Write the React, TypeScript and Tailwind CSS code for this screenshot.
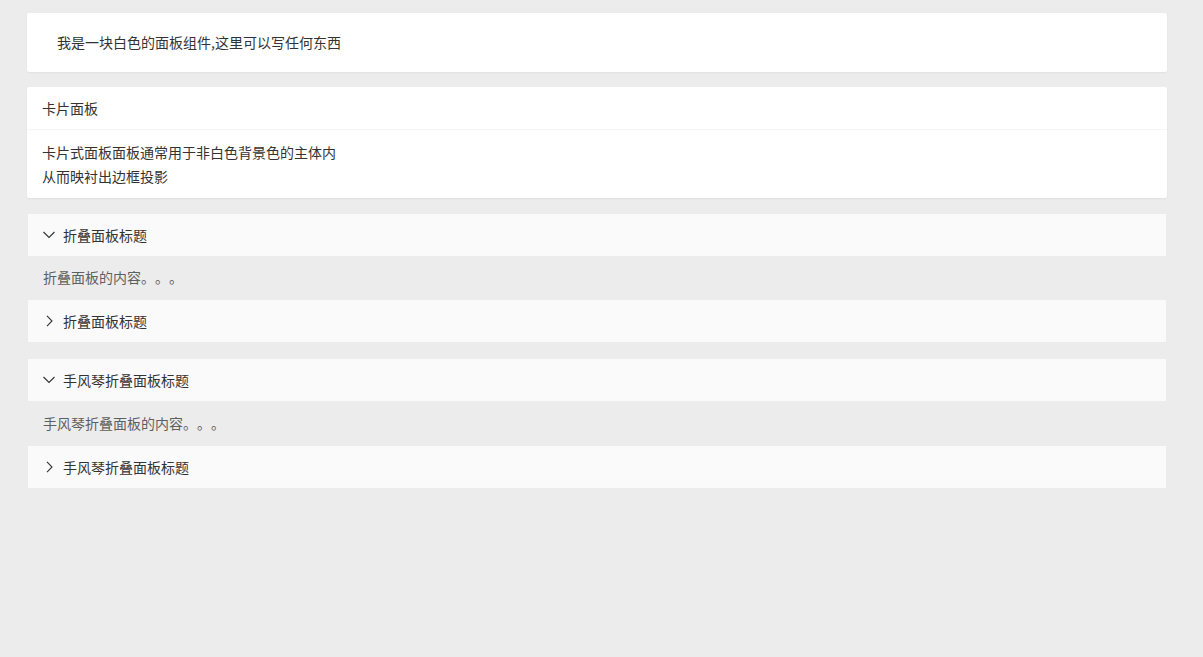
import React from "react"

const font = { fontFamily: '"Noto Sans CJK SC", "Noto Sans", sans-serif' }

const Down = () => (
  <svg width="12" height="12" viewBox="0 0 12 12" className="absolute left-[15px] top-[15px]">
    <polyline points="0.5,3 6,8.5 11.5,3" fill="none" stroke="#333" strokeWidth="1.1" />
  </svg>
)

const Right = () => (
  <svg width="12" height="12" viewBox="0 0 12 12" className="absolute left-[15px] top-[15px]">
    <polyline points="4,0.8 9,6 4,11.2" fill="none" stroke="#333" strokeWidth="1.1" />
  </svg>
)

interface ItemProps {
  title: string
  content?: string
  open?: boolean
  first?: boolean
  tall?: boolean
}

const CollaItem = ({ title, content, open, first, tall }: ItemProps) => (
  <div className={first ? "" : "border-t border-[#ececec]"}>
    <div className="relative h-[42px] leading-[42px] pl-[35px] bg-[#fafafa] text-[#333] text-sm">
      {open ? <Down /> : <Right />}
      {title}
    </div>
    {open && (
      <div
        className={
          "px-[15px] py-[10px] text-[#5f5f5f] text-sm [text-spacing-trim:space-all] " +
          (tall ? "leading-[24px]" : "leading-[23px]")
        }
      >
        {content}
      </div>
    )}
  </div>
)

export default function App() {
  return (
    <div className="min-h-[657px] w-full bg-[#ececec] pl-[27px] pt-[13px] pr-[36px]" style={font}>
      <div className="bg-white rounded-[2px] shadow-[0_1px_2px_0_rgba(0,0,0,0.05)] px-[30px] py-[20px] leading-[19px] text-sm text-[#333] mb-[15px]">
        我是一块白色的面板组件,这里可以写任何东西
      </div>

      <div className="bg-white rounded-[2px] shadow-[0_1px_2px_0_rgba(0,0,0,0.05)] mb-[15px] text-sm text-[#333]">
        <div className="h-[43px] leading-[42px] px-[15px] border-b border-[#f6f6f6]">卡片面板</div>
        <div className="px-[15px] py-[10px] leading-[24px]">
          卡片式面板面板通常用于非白色背景色的主体内
          <br />
          从而映衬出边框投影
        </div>
      </div>

      <div className="border border-[#ececec] rounded-[2px] mb-[15px]">
        <CollaItem first open title="折叠面板标题" content="折叠面板的内容。。。" />
        <CollaItem title="折叠面板标题" />
      </div>

      <div className="border border-[#ececec] rounded-[2px]">
        <CollaItem first open tall title="手风琴折叠面板标题" content="手风琴折叠面板的内容。。。" />
        <CollaItem title="手风琴折叠面板标题" />
      </div>
    </div>
  )
}
